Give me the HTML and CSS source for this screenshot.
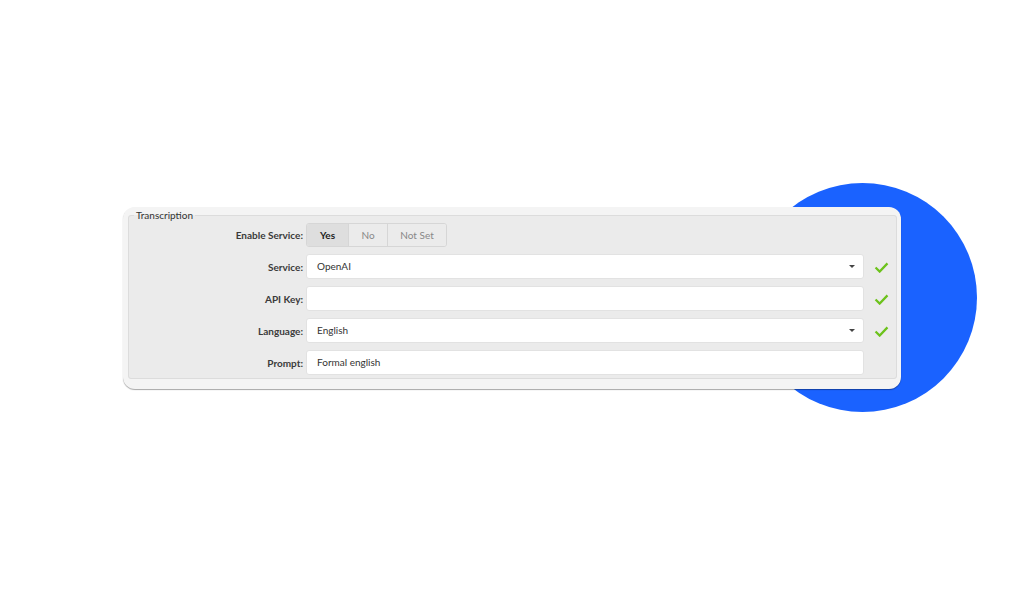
FILE: index.html
```html
<!DOCTYPE html>
<html lang="en">

<head>
    <meta charset="UTF-8">
    <meta name="viewport" content="width=device-width, initial-scale=1.0">
    <title>Transcription Settings</title>
    <link rel="stylesheet" href="styles.css">
</head>

<body>

    <div class="stage">
        <div class="blob"></div>

        <div class="card">
            <fieldset class="group">
                <legend>Transcription</legend>

                <div class="form-grid">
                    <label>Enable Service:</label>
                    <div class="toggle">
                        <button class="active">Yes</button>
                        <button>No</button>
                        <button>Not Set</button>
                    </div>
                    <span></span>

                    <label for="service">Service:</label>
                    <div class="field select">OpenAI<span class="caret"></span></div>
                    <svg class="check" viewBox="0 0 16 12"><polyline points="1.5,6 6,10.5 14.5,1.5" /></svg>

                    <label for="apiKey">API Key:</label>
                    <div class="field"></div>
                    <svg class="check" viewBox="0 0 16 12"><polyline points="1.5,6 6,10.5 14.5,1.5" /></svg>

                    <label for="language">Language:</label>
                    <div class="field select">English<span class="caret"></span></div>
                    <svg class="check" viewBox="0 0 16 12"><polyline points="1.5,6 6,10.5 14.5,1.5" /></svg>

                    <label for="prompt">Prompt:</label>
                    <div class="field">Formal english</div>
                    <span></span>
                </div>
            </fieldset>
        </div>
    </div>

</body>

</html>
```

FILE: styles.css
```css
body {
    margin: 0;
    background: #ffffff;
    font-family: Lato, "Open Sans", sans-serif;
    color: #333;
}

.stage {
    position: relative;
    width: 1024px;
    height: 596px;
    padding-top: 207px;
    box-sizing: border-box;
}

/* blue circle sitting behind the card */
.blob {
    position: absolute;
    left: 748px;
    top: 183px;
    width: 229px;
    height: 229px;
    border-radius: 50%;
    background: #1a62ff;
}

.card {
    position: relative;
    margin-left: 123px;
    width: 778px;
    box-sizing: border-box;
    padding: 2px 5px 10px 5px;
    background: #f4f4f4;
    border-radius: 12px;
    box-shadow: 0 1px 1px rgba(0, 0, 0, 0.35);
}

.group {
    margin: 0;
    padding: 2px 0 3px 0;
    border: 1px solid #dcdcdc;
    border-radius: 3px;
    background: #ebebeb;
}

.group legend {
    margin-left: 5px;
    padding: 0 2px;
    font-size: 10px;
    line-height: 12px;
    color: #333;
}

.form-grid {
    display: grid;
    grid-template-columns: 175px 558px 29px;
    column-gap: 3px;
    row-gap: 7px;
    align-items: center;
    margin-left: -1px;
}

.form-grid label {
    text-align: right;
    font-size: 10px;
    font-weight: bold;
    color: #3a3a3a;
}

.toggle {
    display: flex;
    width: max-content;
    border: 1px solid #d6d6d6;
    border-radius: 3px;
    overflow: hidden;
}

.toggle button {
    height: 22px;
    padding: 0;
    border: none;
    border-left: 1px solid #d6d6d6;
    background: #ebebeb;
    font-family: inherit;
    font-size: 10px;
    color: #888;
}

.toggle button:nth-child(1) {
    width: 41px;
    border-left: none;
}

.toggle button:nth-child(2) {
    width: 39px;
}

.toggle button:nth-child(3) {
    width: 59px;
}

.toggle button.active {
    background: #dedede;
    font-weight: bold;
    color: #222;
}

.field {
    position: relative;
    height: 25px;
    box-sizing: border-box;
    padding-left: 10px;
    background: #ffffff;
    border: 1px solid #e2e2e2;
    border-radius: 3px;
    font-size: 10px;
    line-height: 23px;
    color: #333;
}

.caret {
    position: absolute;
    right: 8px;
    top: 10px;
    width: 0;
    height: 0;
    border-left: 3px solid transparent;
    border-right: 3px solid transparent;
    border-top: 3px solid #444;
}

.check {
    width: 15px;
    height: 11px;
    margin-left: 7px;
    margin-top: 2px;
}

.check polyline {
    fill: none;
    stroke: #6cc21b;
    stroke-width: 2.4;
}
```
